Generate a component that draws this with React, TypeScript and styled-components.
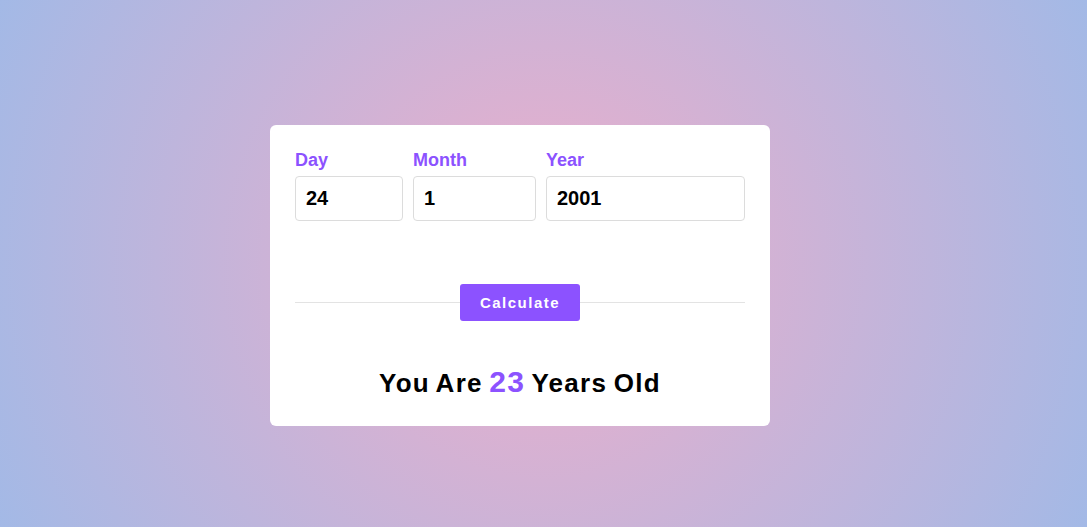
import React from "react";
import styled, { createGlobalStyle } from "styled-components";

const Global = createGlobalStyle`
  * { box-sizing: border-box; }
  html, body { margin: 0; padding: 0; }
  body {
    font-family: "Liberation Sans", Arial, sans-serif;
    min-height: 527px;
    background: radial-gradient(circle at 50% 50%, #eeaeca 0%, #a3b9e6 100%);
  }
`;

const Page = styled.div`
  height: 527px;
  padding: 125px 0 0 270px;
  display: flex;
  align-items: flex-start;
  justify-content: flex-start;
`;

const Card = styled.div`
  width: 500px;
  height: 301px;
  background: #fff;
  border-radius: 6px;
  padding: 25px 25px 0;
  display: flex;
  flex-direction: column;
`;

const Fields = styled.div`
  display: flex;
  gap: 10px;
`;

const Field = styled.label<{ $w: number }>`
  width: ${(p) => p.$w}px;
  display: flex;
  flex-direction: column;
  gap: 6px;
`;

const Label = styled.span`
  color: #8c52ff;
  font-weight: 700;
  font-size: 18px;
  line-height: 20px;
`;

const Input = styled.input`
  width: 100%;
  height: 45px;
  border: 1px solid #dcdcdc;
  border-radius: 4px;
  padding: 0 10px;
  font-family: "Liberation Sans", Arial, sans-serif;
  font-weight: 700;
  font-size: 20px;
  color: #000;
  outline: none;
`;

const DividerRow = styled.div`
  margin-top: 63px;
  position: relative;
  display: flex;
  justify-content: center;
  align-items: center;
  height: 37px;
  &::before {
    content: "";
    position: absolute;
    left: 0;
    right: 0;
    top: 18px;
    height: 1px;
    background: #e3e3e3;
  }
`;

const Button = styled.button`
  position: relative;
  width: 120px;
  height: 37px;
  border: none;
  border-radius: 3px;
  background: #8c52ff;
  color: #fff;
  font-family: "Liberation Sans", Arial, sans-serif;
  font-weight: 700;
  font-size: 15px;
  letter-spacing: 1.5px;
  cursor: pointer;
`;

const Result = styled.h2`
  margin: 44px 0 0;
  text-align: center;
  font-size: 26px;
  font-weight: 900;
  letter-spacing: 1.3px;
  word-spacing: -2px;
  color: #000;
`;

const Age = styled.span`
  color: #8c52ff;
  font-size: 30px;
`;

export default function App() {
  return (
    <>
      <Global />
      <Page>
        <Card>
          <Fields>
            <Field $w={108}>
              <Label>Day</Label>
              <Input defaultValue="24" />
            </Field>
            <Field $w={123}>
              <Label>Month</Label>
              <Input defaultValue="1" />
            </Field>
            <Field $w={199}>
              <Label>Year</Label>
              <Input defaultValue="2001" />
            </Field>
          </Fields>
          <DividerRow>
            <Button>Calculate</Button>
          </DividerRow>
          <Result>
            You Are <Age>23</Age> Years Old
          </Result>
        </Card>
      </Page>
    </>
  );
}
